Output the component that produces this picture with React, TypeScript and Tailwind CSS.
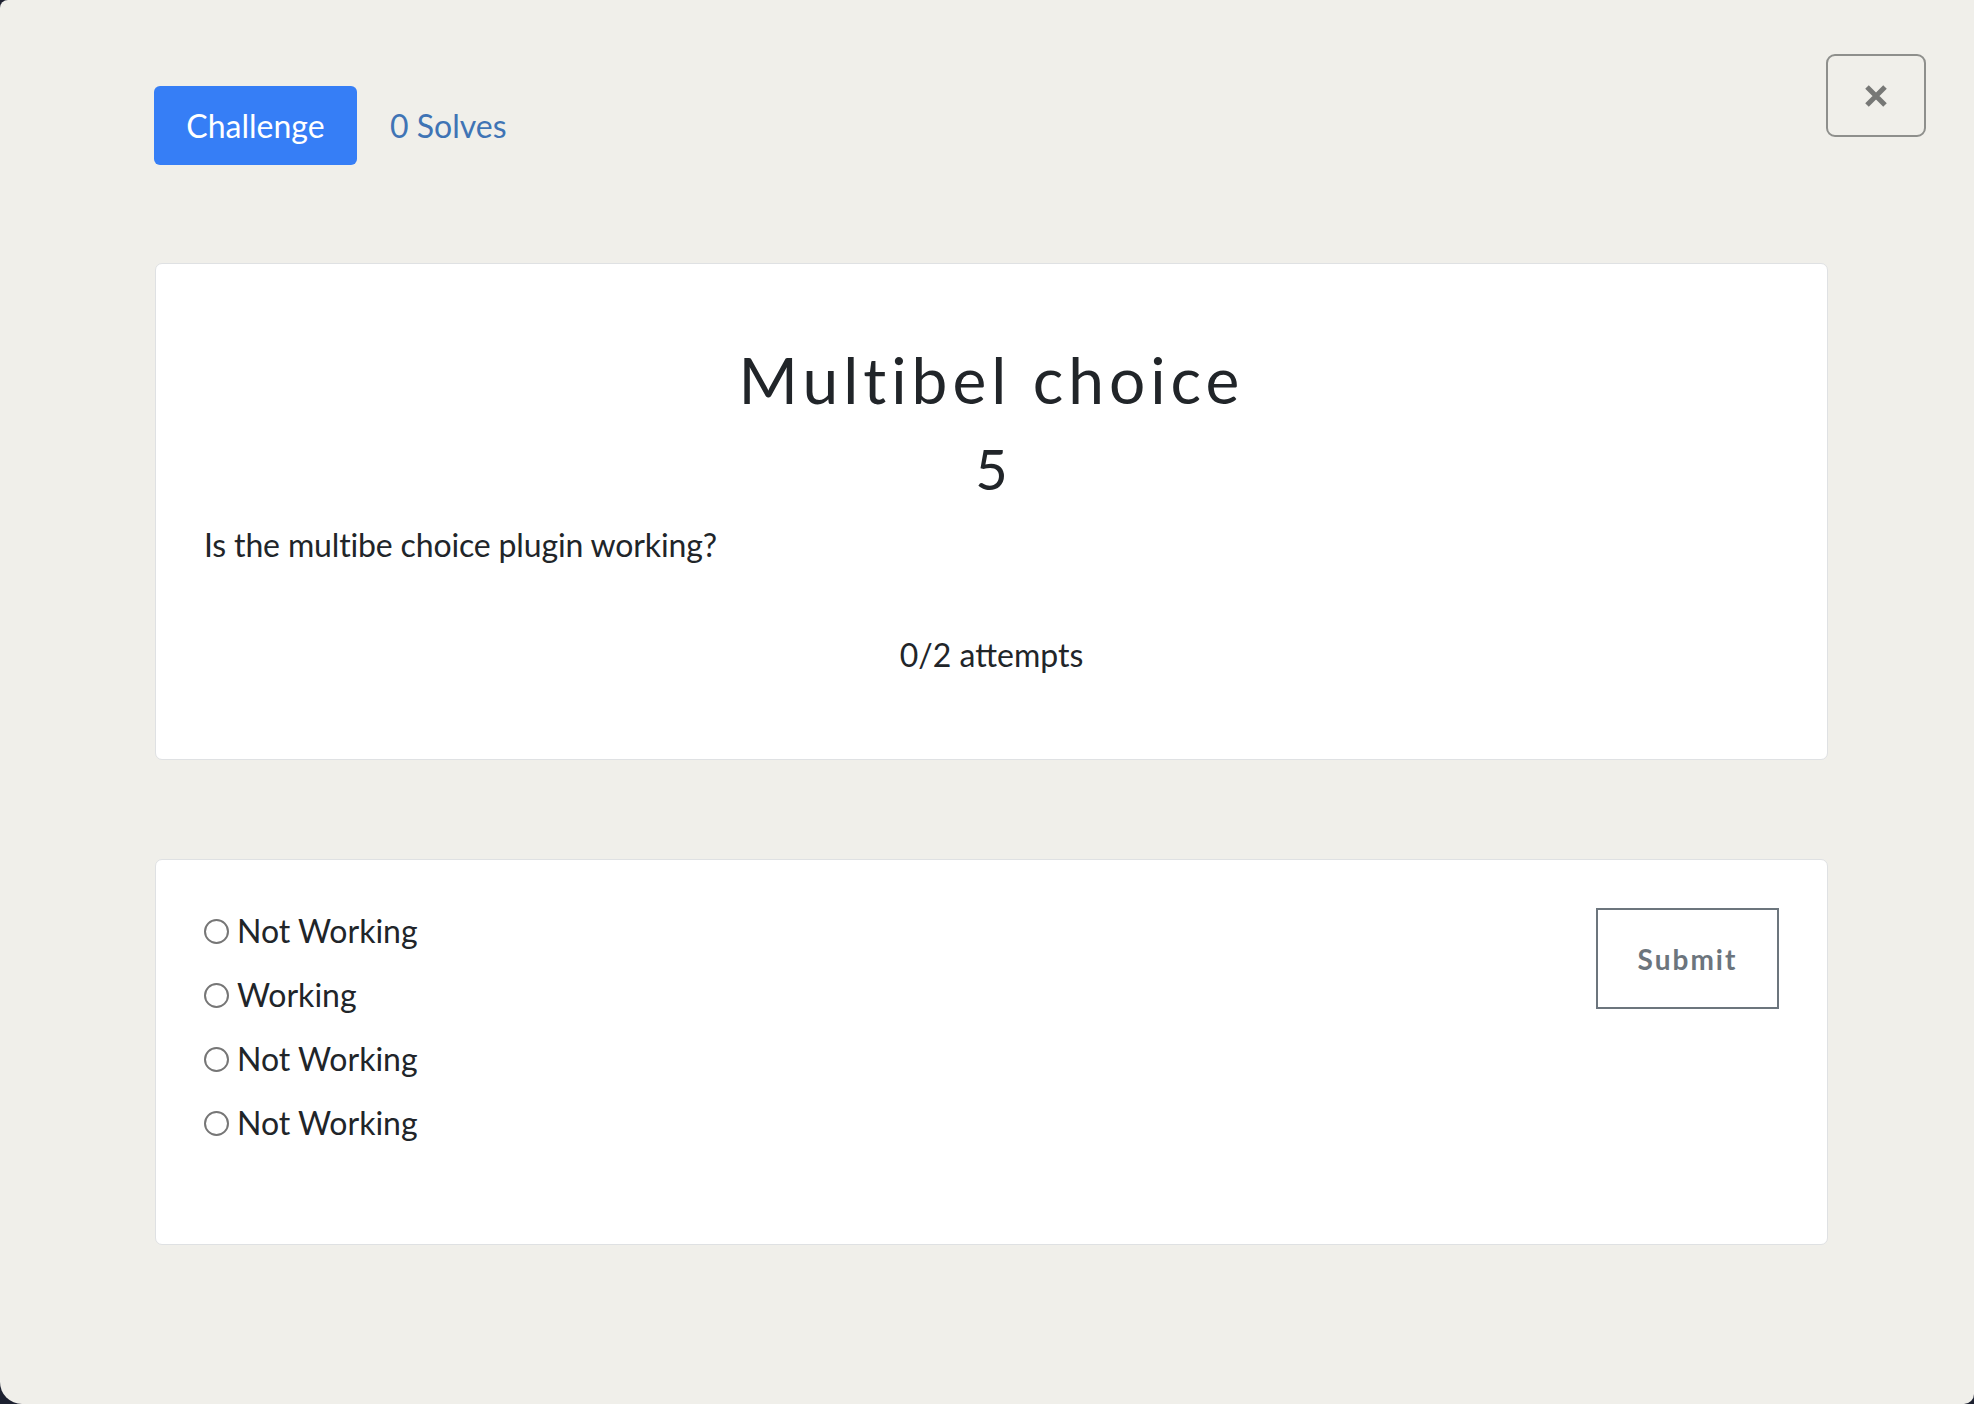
import React from 'react';

const options = ['Not Working', 'Working', 'Not Working', 'Not Working'];

function CloseIcon() {
  return (
    <svg width="24" height="24" viewBox="0 0 24 24" fill="none">
      <path d="M3 3 L21 21 M21 3 L3 21" stroke="#777876" strokeWidth="5" strokeLinecap="butt" />
    </svg>
  );
}

function Radio({ label }: { label: string }) {
  return (
    <label className="flex h-[48px] items-center gap-[8px]">
      <span className="box-border h-[25px] w-[25px] shrink-0 rounded-full border-2 border-[#767676] bg-white" />
      <span className="text-[32px] leading-[48px] text-[#212529]">{label}</span>
    </label>
  );
}

export default function App() {
  return (
    <div className="h-[1404px] w-[1974px] overflow-hidden bg-[#1d2130] font-['Lato',sans-serif]">
      <div className="relative h-full w-full rounded-tl-[8px] rounded-bl-[22px] rounded-br-[10px] bg-[#f0efea]">
        <button className="absolute right-[48px] top-[54px] flex h-[83px] w-[100px] items-center justify-center rounded-[9px] border-2 border-[#8e8f8c]">
          <CloseIcon />
        </button>

        <div className="flex items-center pl-[154px] pt-[86px]">
          <button className="h-[79px] w-[203px] rounded-[6px] bg-[#367ef6] text-[32px] text-white">
            Challenge
          </button>
          <span className="ml-[33px] text-[32px] text-[#3f74b5]">0 Solves</span>
        </div>

        <div className="ml-[155px] mt-[98px] w-[1673px] rounded-[7px] border border-[#dfe1e3] bg-white px-[48px] pb-[80px] pt-[77px] text-[#212529]">
          <h3 className="text-center text-[64px] font-normal leading-[77px] tracking-[5px]">Multibel choice</h3>
          <h4 className="mt-[17px] text-center text-[56px] leading-[67px]">5</h4>
          <p className="mt-[19px] text-[32px] leading-[48px] tracking-[-0.15px]">Is the multibe choice plugin working?</p>
          <p className="mt-[62px] text-center text-[32px] leading-[48px]">0/2 attempts</p>
        </div>

        <div className="ml-[155px] mt-[99px] flex w-[1673px] items-start justify-between rounded-[7px] border border-[#dfe1e3] bg-white px-[48px] pb-[97px] pt-[47px]">
          <div className="flex flex-col gap-[16px]">
            {options.map((o, i) => (
              <Radio key={i} label={o} />
            ))}
          </div>
          <button className="mt-px h-[101px] w-[183px] border-2 border-[#6c757d] text-[28px] font-bold tracking-[2px] text-[#6c757d]">
            Submit
          </button>
        </div>
      </div>
    </div>
  );
}
